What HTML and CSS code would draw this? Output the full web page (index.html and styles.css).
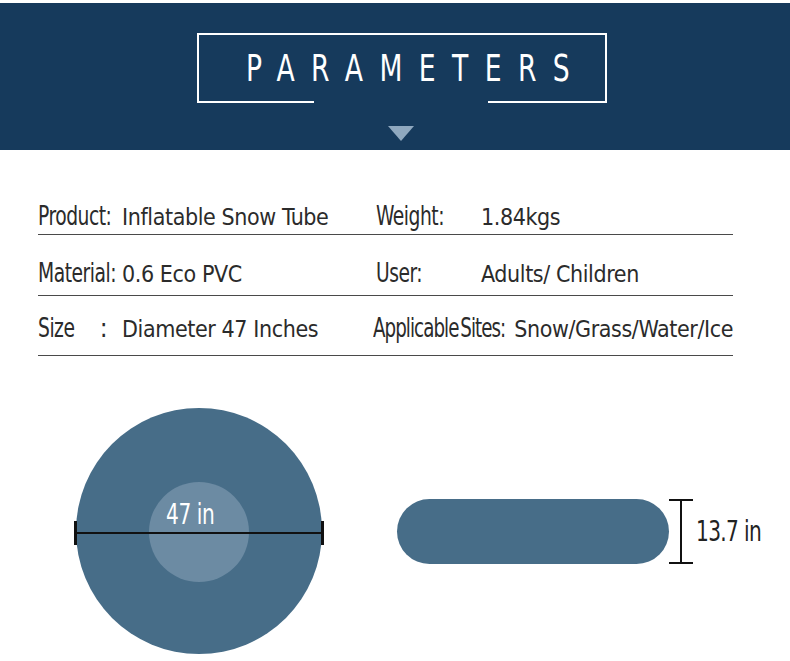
FILE: index.html
```html
<!DOCTYPE html>
<html>
<head>
<meta charset="utf-8">
<link rel="stylesheet" href="styles.css">
</head>
<body>
<header class="banner">
  <div class="title-box">
    <h1 class="title">PARAMETERS</h1>
    <span class="gap"></span>
  </div>
  <div class="arrow"></div>
</header>

<section class="specs">
  <div class="row row1">
    <div class="cell left">
      <span class="label"><span class="lt">Product:</span></span>
      <span class="value">Inflatable Snow Tube</span>
    </div>
    <div class="cell right">
      <span class="label lw"><span class="lt">Weight:</span></span>
      <span class="value">1.84kgs</span>
    </div>
  </div>
  <div class="row row2">
    <div class="cell left">
      <span class="label"><span class="lt">Material:</span></span>
      <span class="value">0.6 Eco PVC</span>
    </div>
    <div class="cell right">
      <span class="label lw"><span class="lt">User:</span></span>
      <span class="value">Adults/ Children</span>
    </div>
  </div>
  <div class="row row3">
    <div class="cell left">
      <span class="label"><span class="lt">Size</span><span class="colon">:</span></span>
      <span class="value">Diameter 47 Inches</span>
    </div>
    <div class="cell right">
      <span class="label la"><span class="lt lt-tight">Applicable Sites:</span></span>
      <span class="value">Snow/Grass/Water/Ice</span>
    </div>
  </div>
</section>

<section class="diagrams">
  <div class="disc">
    <div class="hole"></div>
    <div class="dim-line"></div>
    <span class="disc-label">47 in</span>
  </div>
  <div class="side">
    <div class="pill"></div>
    <div class="bracket"></div>
    <span class="side-label">13.7 in</span>
  </div>
</section>
</body>
</html>
```
FILE: styles.css
```css
* { box-sizing: border-box; }
html, body { margin: 0; padding: 0; background: #fff; }
body {
  width: 790px;
  height: 661px;
  overflow: hidden;
  font-family: "DejaVu Sans Condensed", "Liberation Sans", sans-serif;
}

.banner {
  margin-top: 3px;
  height: 147px;
  background: #163a5c;
  display: flex;
  flex-direction: column;
  align-items: center;
  padding-top: 30px;
}
.title-box {
  position: relative;
  width: 410px;
  height: 70px;
  margin-left: 14px;
  border: 2px solid #fff;
  display: flex;
  align-items: center;
  justify-content: center;
}
.title {
  margin: 0;
  color: #fff;
  font-weight: normal;
  font-size: 37px;
  letter-spacing: 20.5px;
  padding-left: 36px;
  transform: scaleX(0.8);
  line-height: 1;
  white-space: nowrap;
}
.gap {
  position: absolute;
  left: 115px;
  bottom: -2px;
  width: 174px;
  height: 2px;
  background: #163a5c;
}
.arrow {
  margin-top: 23px;
  margin-left: 12px;
  width: 0;
  height: 0;
  border-left: 13px solid transparent;
  border-right: 13px solid transparent;
  border-top: 15px solid #8fa8bf;
}

.specs {
  margin: 25px 0 0 38px;
  width: 695px;
}
.row {
  display: flex;
  align-items: flex-end;
  height: 60px;
  padding-bottom: 9px;
  border-bottom: 1.5px solid #4a4a4a;
  color: #2b2b2b;
}
.row1 { padding-bottom: 5px; }
.row2 { height: 61px; padding-bottom: 9px; }
.row3 { padding-bottom: 14px; }
.cell {
  display: flex;
  align-items: baseline;
}
.left { width: 338px; }
.right { flex: 1; }

.label {
  display: inline-flex;
  align-items: baseline;
  width: 84px;
  font-size: 26px;
  line-height: 1;
  white-space: nowrap;
}
.lt {
  display: inline-block;
  transform: scaleX(0.8);
  transform-origin: left bottom;
  letter-spacing: -0.6px;
}
.lt-tight {
  letter-spacing: -1.2px;
  word-spacing: -4px;
  transform: scaleX(0.78);
}
.colon {
  display: inline-block;
  margin-left: 16px;
}
.lw { width: 105px; }
.la { width: 141px; }

.value {
  font-size: 23px;
  line-height: 1;
  letter-spacing: -0.4px;
  white-space: nowrap;
}

.diagrams {
  position: relative;
  height: 306px;
}
.disc {
  position: absolute;
  left: 76px;
  top: 52px;
  width: 246px;
  height: 246px;
  border-radius: 50%;
  background: #476d88;
}
.hole {
  position: absolute;
  left: 73px;
  top: 74px;
  width: 100px;
  height: 100px;
  border-radius: 50%;
  background: #6c8ba3;
}
.dim-line {
  position: absolute;
  left: -2px;
  right: -2px;
  top: 124px;
  height: 2px;
  background: #111;
}
.dim-line::before,
.dim-line::after {
  content: "";
  position: absolute;
  top: -11px;
  width: 3px;
  height: 24px;
  background: #111;
}
.dim-line::before { left: 0; }
.dim-line::after { right: 0; }
.disc-label {
  position: absolute;
  left: 90px;
  top: 93px;
  color: #fff;
  font-size: 28px;
  line-height: 1;
  letter-spacing: -0.5px;
  transform: scaleX(0.8);
  transform-origin: left;
  white-space: nowrap;
}

.side {
  position: absolute;
  left: 397px;
  top: 143px;
  display: flex;
  align-items: center;
}
.pill {
  width: 272px;
  height: 65px;
  border-radius: 33px;
  background: #476d88;
}
.bracket {
  position: relative;
  width: 24px;
  height: 65px;
  border-top: 2px solid #111;
  border-bottom: 2px solid #111;
}
.bracket::before {
  content: "";
  position: absolute;
  left: 11px;
  top: 0;
  bottom: 0;
  width: 2px;
  background: #111;
}
.side-label {
  margin-left: 3px;
  font-size: 28px;
  line-height: 1;
  letter-spacing: -0.8px;
  color: #222;
  transform: scaleX(0.8);
  transform-origin: left;
  white-space: nowrap;
}
```
